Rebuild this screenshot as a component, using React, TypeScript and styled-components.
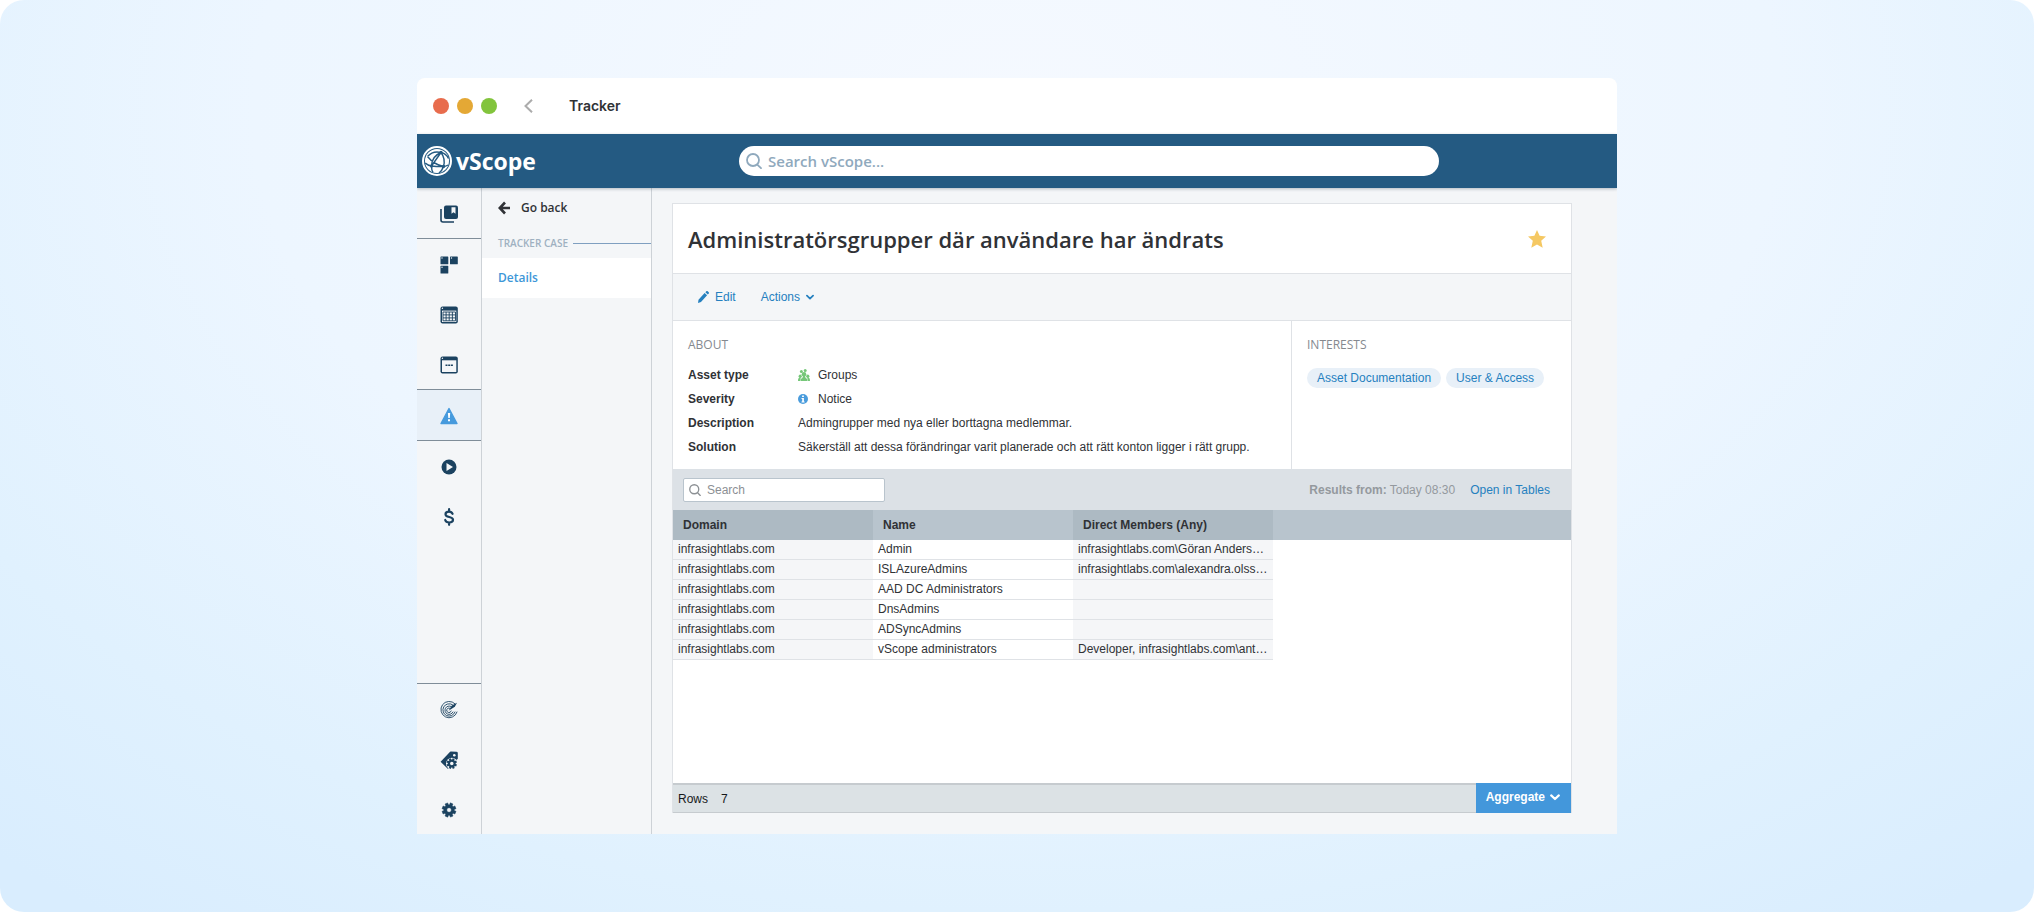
import React from 'react';
import styled, { createGlobalStyle, css } from 'styled-components';

const sans = '"Liberation Sans", Arial, sans-serif';
const humanist = '"Open Sans", "Noto Sans", sans-serif';
const system = 'Inter, Roboto, sans-serif';

const GlobalStyle = createGlobalStyle`
  *, *::before, *::after { box-sizing: border-box; }
  body { margin: 0; background: #ffffff; font: 12px/20px ${sans}; color: #303236; }
  h1, h2, p, dl, dd { margin: 0; }
  button { border: 0; padding: 0; background: none; font: inherit; color: inherit; cursor: pointer; }
  a { color: inherit; text-decoration: none; }
  svg { display: block; flex: none; }
`;

const Stage = styled.div`
  display: flex;
  justify-content: center;
  min-height: 100vh;
  padding: 78px 40px;
  border-radius: 24px;
  background: radial-gradient(ellipse 75% 110% at 50% 12%, #f5f9ff 0%, #edf6ff 50%, #e0f1fe 80%, #d9edfe 100%);
`;

const AppWindow = styled.div`
  display: flex;
  flex-direction: column;
  width: 100%;
  max-width: 1200px;
  border-radius: 8px 8px 0 0;
  overflow: hidden;
  background: #f4f6f8;
`;

const TitleBar = styled.div`
  display: flex;
  align-items: center;
  height: 56px;
  padding: 0 16px;
  background: #ffffff;
`;

const Lights = styled.div`
  display: flex;
  gap: 8px;
`;

const Light = styled.span<{ $color: string }>`
  width: 16px;
  height: 16px;
  border-radius: 50%;
  background: ${(p) => p.$color};
`;

const BackButton = styled.button`
  margin: 0 36px 0 27px;
`;

const WindowTitle = styled.span`
  font: 600 14px/20px ${system};
`;

const Header = styled.header`
  display: flex;
  align-items: center;
  height: 54px;
  background: #245a82;
  box-shadow: 0 1px 3px rgba(30, 50, 70, 0.3);
  z-index: 1;
`;

const Brand = styled.a`
  display: flex;
  align-items: center;
  gap: 4px;
  width: 144px;
  padding-left: 5px;
  color: #ffffff;
  font: 700 23px/30px ${humanist};
`;

const HeaderMain = styled.div`
  flex: 1;
  display: flex;
  justify-content: center;
`;

const GlobalSearch = styled.label`
  display: flex;
  align-items: center;
  gap: 6px;
  width: 100%;
  max-width: 700px;
  height: 30px;
  padding: 0 7px;
  border-radius: 15px;
  background: #ffffff;
  color: #8fa9bd;
`;

const plainInput = css`
  flex: 1;
  min-width: 0;
  border: 0;
  padding: 0;
  outline: 0;
  background: transparent;
  color: inherit;
  &::placeholder { color: inherit; opacity: 1; }
`;

const GlobalInput = styled.input`
  ${plainInput}
  font: 600 15px/20px ${humanist};
`;

const Body = styled.div`
  flex: 1;
  display: flex;
`;

const IconRail = styled.nav`
  display: flex;
  flex-direction: column;
  justify-content: space-between;
  width: 65px;
  border-right: 1px solid #cdd2d7;
  color: #1b4260;
`;

const RailGroup = styled.div`
  display: flex;
  flex-direction: column;
`;

const RailItem = styled.button<{ $line?: boolean; $active?: boolean }>`
  display: flex;
  align-items: center;
  justify-content: center;
  box-sizing: content-box;
  height: 48px;
  padding-top: 2px;
  ${(p) => p.$line && 'border-bottom: 1px solid #7f8d99;'}
  ${(p) => p.$active && 'background: #e8f0f8; color: #469add;'}
`;

const RailFooter = styled(RailGroup)`
  border-top: 1px solid #7f8d99;
`;

const SideNav = styled.nav`
  width: 170px;
  border-right: 1px solid #cdd2d7;
  font: 600 12px/20px ${humanist};
`;

const GoBack = styled.a`
  display: flex;
  align-items: center;
  gap: 11px;
  height: 40px;
  padding: 0 16px;
`;

const NavHeading = styled.h2`
  display: flex;
  align-items: center;
  gap: 5px;
  height: 30px;
  padding-left: 16px;
  color: #9fb1c1;
  font: 600 10px/20px ${humanist};
  &::after { content: ''; flex: 1; height: 1px; background: #7f9fc0; }
`;

const NavLink = styled.a`
  display: flex;
  align-items: center;
  height: 40px;
  padding: 0 16px;
  background: #ffffff;
  color: #3d97d8;
`;

const Main = styled.main`
  flex: 1;
  display: flex;
  min-width: 0;
  padding: 15px 45px 21px 20px;
`;

const Card = styled.section`
  flex: 1;
  display: flex;
  flex-direction: column;
  min-width: 0;
  border: 1px solid #dfe2e6;
  border-bottom: 0;
  background: #ffffff;
`;

const CardHeader = styled.div`
  display: flex;
  align-items: center;
  justify-content: space-between;
  height: 70px;
  padding: 0 25px 0 15px;
  border-bottom: 1px solid #dfe2e6;
`;

const PageTitle = styled.h1`
  font: 600 22px/30px ${humanist};
`;

const Toolbar = styled.div`
  display: flex;
  align-items: center;
  gap: 25px;
  height: 47px;
  padding: 0 25px;
  border-bottom: 1px solid #dfe2e6;
  background: #f4f6f8;
  color: #2580bf;
`;

const ToolButton = styled.button`
  display: flex;
  align-items: center;
  gap: 6px;
`;

const Info = styled.div`
  display: grid;
  grid-template-columns: minmax(0, 1fr) 280px;
`;

const InfoPane = styled.section<{ $divided?: boolean }>`
  padding: 14px 15px 10px;
  ${(p) => p.$divided && 'border-left: 1px solid #dfe2e6;'}
`;

const InfoHeading = styled.h2`
  margin-bottom: 8px;
  color: #85898f;
  font: 400 12px/20px ${humanist};
`;

const Facts = styled.dl`
  display: grid;
  grid-template-columns: 110px minmax(0, 1fr);
  line-height: 24px;
  dt { font-weight: 700; }
`;

const FactValue = styled.dd`
  display: flex;
  align-items: center;
`;

const FactIcon = styled.span`
  width: 20px;
`;

const Tags = styled.div`
  display: flex;
  gap: 5px;
  padding-top: 5px;
`;

const Tag = styled.a`
  padding: 0 10px;
  border-radius: 10px;
  background: #e8f0f8;
  color: #2580bf;
`;

const ResultBar = styled.div`
  display: flex;
  align-items: center;
  justify-content: space-between;
  height: 41px;
  padding: 0 21px 0 10px;
  background: #dce1e6;
`;

const FilterBox = styled.label`
  display: flex;
  align-items: center;
  gap: 6px;
  width: 202px;
  height: 24px;
  padding: 0 5px;
  border: 1px solid #b9c4cd;
  border-radius: 2px;
  background: #ffffff;
  color: #8c9094;
`;

const FilterInput = styled.input`
  ${plainInput}
  font: 12px/20px ${sans};
`;

const ResultMeta = styled.div`
  display: flex;
  gap: 15px;
  color: #94999e;
  a { color: #2580bf; }
`;

const TableArea = styled.div`
  flex: 1;
  background: linear-gradient(#b8c4cd 30px, transparent 30px);
`;

const DataTable = styled.table`
  width: 600px;
  table-layout: fixed;
  border-collapse: separate;
  border-spacing: 0;
  text-align: left;
  th { height: 30px; padding: 0 10px; }
  th:nth-child(odd) { background: #adbac3; }
  td {
    height: 20px;
    padding: 0 5px;
    border-bottom: 1px solid #dfe2e6;
    line-height: 19px;
    white-space: nowrap;
    overflow: hidden;
    text-overflow: ellipsis;
  }
  td:nth-child(odd) { background: #f5f6f8; }
`;

const CardFooter = styled.footer`
  display: flex;
  justify-content: space-between;
  height: 30px;
  background: #dce2e5;
  color: #16181a;
`;

const RowCount = styled.p`
  flex: 1;
  display: flex;
  align-items: center;
  gap: 13px;
  padding-left: 5px;
  border-top: 2px solid #c6cbcf;
  border-bottom: 1px solid #c6cbcf;
`;

const AggregateButton = styled.button`
  display: flex;
  align-items: center;
  gap: 5px;
  padding: 0 11px 2px 10px;
  background: #4397db;
  color: #ffffff;
  font-weight: 700;
`;

const Chevron = ({ size }: { size: number }) => (
  <svg width={size} height={size} viewBox="0 0 10 10" fill="none" stroke="currentColor" strokeWidth="2.200" strokeLinecap="round" strokeLinejoin="round">
    <path d="M1.200 3.400 5 7l3.800-3.600" />
  </svg>
);

const SearchIcon = ({ size }: { size: number }) => (
  <svg width={size} height={size} viewBox="0 0 16 16" fill="none" stroke="currentColor" strokeWidth="1.800" strokeLinecap="round">
    <circle cx="7" cy="7" r="6" />
    <path d="m11.500 11.800 3.500 3.400" />
  </svg>
);

const LogoMark = () => (
  <svg width="30" height="30" viewBox="0 0 30 30" fill="none">
    <circle cx="15" cy="15" r="14" stroke="#fff" strokeWidth="2" />
    <circle cx="15" cy="15" r="12" fill="#fff" />
    <g stroke="#245a82" strokeWidth="1.400">
      <path d="M19 6.500C13 9 9.500 14 9.500 20c0 3 .5 5 1.500 6.500M19 6.500c3 4 4 9 2.500 14-1 3-2.500 5-4.500 6.500M19 6.500c-6-1.500-10 0-13.500 4M19 6.500c4 .5 6 3 7.500 6M3.200 17c2 2 4 2.700 6.300 3 4 .5 8 1 12 .5 2-.2 3.500-.8 4.500-1.500M5.500 10.500c4 5 9 8.500 16 10M19 6.500 9.500 20" />
    </g>
    <g fill="#245a82">
      <circle cx="19" cy="6.500" r="1.700" />
      <circle cx="9.500" cy="20" r="1.700" />
      <circle cx="21.500" cy="20.500" r="1.700" />
    </g>
  </svg>
);

const gearPath =
  'M19.400 13a7.500 7.500 0 0 0 0-2l2.600-1-1.700-4.100-2.500 1.100a7.500 7.500 0 0 0-1.500-1.500L17.400 3 13.400 1.300 12.500 4h-2L9.500 1.400 5.600 3l1.100 2.600a7.500 7.500 0 0 0-1.400 1.400L2.700 6 1.100 10l2.500 1a7.500 7.500 0 0 0 0 2l-2.500 1 1.600 4 2.600-1.100a7.500 7.500 0 0 0 1.400 1.400L5.600 21l4 1.700 1-2.700h2l1 2.600 3.900-1.600-1.200-2.600a7.500 7.500 0 0 0 1.500-1.400l2.500 1 1.700-4zM11.600 15.500a3.500 3.500 0 1 1 0-7 3.500 3.500 0 0 1 0 7z';

const BookIcon = () => (
  <svg width="18" height="18" viewBox="0 0 18 18">
    <path d="M1 4v11a2 2 0 0 0 2 2h11" fill="none" stroke="currentColor" strokeWidth="1.600" />
    <rect x="4" y="0.500" width="14" height="13.500" rx="2" fill="currentColor" />
    <path d="M11.500 2.300h4v6.500l-2-1.500-2 1.500z" fill="#f4f6f8" />
  </svg>
);

const TilesIcon = () => (
  <svg width="18" height="18" viewBox="0 0 18 18" fill="currentColor">
    <rect x="0.500" y="0.500" width="7.800" height="7.800" rx="0.600" />
    <rect x="10" y="0.500" width="7.800" height="7.800" rx="0.600" />
    <rect x="0.500" y="9.800" width="7.800" height="7.800" rx="0.600" />
    <g fill="#f4f6f8">
      <circle cx="2" cy="2" r="0.700" />
      <circle cx="11.500" cy="2" r="0.700" />
      <circle cx="2" cy="11.300" r="0.700" />
    </g>
  </svg>
);

const GridIcon = () => (
  <svg width="18" height="18" viewBox="0 0 18 18">
    <rect x="0.500" y="0.500" width="17.300" height="17" rx="2" fill="currentColor" />
    <g fill="#f4f6f8">
      <circle cx="2.400" cy="2.200" r="0.700" />
      <path d="M2 4.600h14.300V16H2z" />
    </g>
    <path d="M3 6h12.500v8.800H3zM3 8.900h12.500M3 11.900h12.500M6.100 6v8.800M9.200 6v8.800M12.400 6v8.800" fill="none" stroke="currentColor" strokeWidth="0.900" />
  </svg>
);

const PanelIcon = () => (
  <svg width="18" height="18" viewBox="0 0 18 18">
    <rect x="0.500" y="0.500" width="17.300" height="17" rx="2" fill="currentColor" />
    <rect x="2" y="4.300" width="14.300" height="11.700" fill="#f4f6f8" />
    <circle cx="2.400" cy="2.200" r="0.700" fill="#f4f6f8" />
    <path d="M5.500 9.200h2M8.200 9.200h2M10.900 9.200h2" stroke="currentColor" strokeWidth="1.500" />
  </svg>
);

const AlertIcon = () => (
  <svg width="18" height="18" viewBox="0 0 18 18">
    <path d="M9 1.500 17 16.500H1z" fill="currentColor" stroke="currentColor" strokeWidth="1.400" strokeLinejoin="round" />
    <path d="M7.900 6h2.300l-.4 5H8.300zM8 12.300h2v1.900H8z" fill="#fff" />
  </svg>
);

const PlayIcon = () => (
  <svg width="18" height="18" viewBox="0 0 18 18">
    <circle cx="9" cy="9" r="7.500" fill="currentColor" />
    <path d="M6.500 5v8l6.500-4z" fill="#f4f6f8" />
  </svg>
);

const DollarIcon = () => (
  <svg width="18" height="18" viewBox="0 0 18 18" fill="none" stroke="currentColor" strokeWidth="2.200" strokeLinecap="round">
    <path d="M12.600 5.800C12 4.300 10.800 3.600 9 3.600c-2.200 0-3.500 1.100-3.500 2.600 0 3.900 7.500 1.700 7.500 5.600 0 1.700-1.500 2.700-3.800 2.700-2.200 0-3.500-.9-4-2.500M9.100 1.200v2M9.100 14.800v2" />
  </svg>
);

const RadarIcon = () => (
  <svg width="18" height="18" viewBox="0 0 18 18" fill="none" stroke="currentColor" strokeWidth="0.900" strokeLinecap="round">
    <path d="M15 2.800A8.200 8.200 0 1 0 17 11" />
    <path d="M12.500 3.700A6.200 6.200 0 1 0 15 11" />
    <path d="M11.200 5.500A4.200 4.200 0 1 0 13 11" />
    <path d="M10 7.200A2.300 2.300 0 1 0 11.200 10" />
    <path d="m8.600 9.700 3.200-5.200 5.200-2.700-2.200 4z" fill="currentColor" stroke="none" />
  </svg>
);

const TagGearIcon = () => (
  <svg width="18" height="18" viewBox="0 0 18 18">
    <path d="M.6 10.800 9.400 1.400a2 2 0 0 1 1.500-.8l5.500.1a1.400 1.400 0 0 1 1.400 1.400v5.600L8 18z" fill="currentColor" />
    <circle cx="14.300" cy="4.200" r="1.300" fill="#f4f6f8" />
    <circle cx="11.900" cy="12.600" r="5.900" fill="#f4f6f8" />
    <path transform="translate(6 6.600) scale(0.500)" d={gearPath} fill="currentColor" />
  </svg>
);

const GearIcon = () => (
  <svg width="16" height="16" viewBox="0 0 23 24">
    <path d={gearPath} fill="currentColor" stroke="currentColor" strokeWidth="0.800" strokeLinejoin="round" />
  </svg>
);

const railTop = [
  { label: 'Library', icon: <BookIcon />, line: true },
  { label: 'Dashboards', icon: <TilesIcon /> },
  { label: 'Tables', icon: <GridIcon /> },
  { label: 'Properties', icon: <PanelIcon />, line: true },
  { label: 'Tracker', icon: <AlertIcon />, line: true, active: true },
  { label: 'Discovery', icon: <PlayIcon /> },
  { label: 'Billing', icon: <DollarIcon /> },
];

const railBottom = [
  { label: 'Scan', icon: <RadarIcon /> },
  { label: 'Tag settings', icon: <TagGearIcon /> },
  { label: 'Settings', icon: <GearIcon /> },
];

const rows = [
  ['infrasightlabs.com', 'Admin', 'infrasightlabs.com\\Göran Anders…'],
  ['infrasightlabs.com', 'ISLAzureAdmins', 'infrasightlabs.com\\alexandra.olss…'],
  ['infrasightlabs.com', 'AAD DC Administrators', ''],
  ['infrasightlabs.com', 'DnsAdmins', ''],
  ['infrasightlabs.com', 'ADSyncAdmins', ''],
  ['infrasightlabs.com', 'vScope administrators', 'Developer, infrasightlabs.com\\ant…'],
];

export default function App() {
  return (
    <>
      <GlobalStyle />
      <Stage>
        <AppWindow>
          <TitleBar>
            <Lights>
              <Light $color="#e86c4d" />
              <Light $color="#e4a835" />
              <Light $color="#82c43c" />
            </Lights>
            <BackButton aria-label="Back">
              <svg width="9" height="14" viewBox="0 0 9 14" fill="none" stroke="#acacac" strokeWidth="2">
                <path d="M8 0.700 1.500 7 8 13.300" />
              </svg>
            </BackButton>
            <WindowTitle>Tracker</WindowTitle>
          </TitleBar>

          <Header>
            <Brand href="#">
              <LogoMark />
              vScope
            </Brand>
            <HeaderMain>
              <GlobalSearch>
                <SearchIcon size={16} />
                <GlobalInput type="text" placeholder="Search vScope..." aria-label="Search vScope" />
              </GlobalSearch>
            </HeaderMain>
          </Header>

          <Body>
            <IconRail>
              <RailGroup>
                {railTop.map((item) => (
                  <RailItem key={item.label} aria-label={item.label} $line={item.line} $active={item.active}>
                    {item.icon}
                  </RailItem>
                ))}
              </RailGroup>
              <RailFooter>
                {railBottom.map((item) => (
                  <RailItem key={item.label} aria-label={item.label}>
                    {item.icon}
                  </RailItem>
                ))}
              </RailFooter>
            </IconRail>

            <SideNav>
              <GoBack href="#">
                <svg width="12" height="14" viewBox="0 0 12 14" fill="none" stroke="currentColor" strokeWidth="2.600">
                  <path d="M7 1.500 1.800 7 7 12.500M2 7h10" />
                </svg>
                Go back
              </GoBack>
              <NavHeading>TRACKER CASE</NavHeading>
              <NavLink href="#">Details</NavLink>
            </SideNav>

            <Main>
              <Card>
                <CardHeader>
                  <PageTitle>Administratörsgrupper där användare har ändrats</PageTitle>
                  <button aria-label="Favourite">
                    <svg width="18" height="18" viewBox="0 0 18 18" fill="#f5c863">
                      <path d="m9 0 2.600 5.700 6.400.7-4.800 4.300 1.500 7L9 14.500 3.300 17.700l1.500-7L0 6.400l6.400-.7z" />
                    </svg>
                  </button>
                </CardHeader>

                <Toolbar>
                  <ToolButton>
                    <svg width="11" height="12" viewBox="0 0 11 12" fill="currentColor">
                      <path d="M0 12l.5-3.300L6.600 2l2.500 2.300L3 11zM7.400 1.200 8.300.3a1 1 0 0 1 1.400 0l1 .9a1 1 0 0 1 0 1.400l-.9 1z" />
                    </svg>
                    Edit
                  </ToolButton>
                  <ToolButton>
                    Actions
                    <Chevron size={8} />
                  </ToolButton>
                </Toolbar>

                <Info>
                  <InfoPane>
                    <InfoHeading>ABOUT</InfoHeading>
                    <Facts>
                      <dt>Asset type</dt>
                      <FactValue>
                        <FactIcon>
                          <svg width="12" height="12" viewBox="0 0 12 12" fill="#76c779">
                            <circle cx="6" cy="5.200" r="2.300" />
                            <path d="M2.600 12c0-1.800.4-2.600 1.700-3L5 7h2l.7 2c1.300.4 1.700 1.200 1.700 3zM0 12c0-2.300.6-3.700 2.900-3.900L2.100 12zM12 12c0-2.300-.6-3.700-2.900-3.900l.8 3.900z" />
                            <circle cx="3.400" cy="2.500" r="1.500" />
                            <circle cx="7.200" cy="1.500" r="1.500" />
                            <circle cx="2.200" cy="7.200" r="1.600" />
                            <circle cx="9.800" cy="7.200" r="1.600" />
                          </svg>
                        </FactIcon>
                        Groups
                      </FactValue>
                      <dt>Severity</dt>
                      <FactValue>
                        <FactIcon>
                          <svg width="10" height="10" viewBox="0 0 10 10">
                            <circle cx="5" cy="5" r="5" fill="#4a9cdc" />
                            <path d="M4.100 1.500h1.800v1.600H4.100zM3.500 4h2.400v3.400h.7v1.100H3.500V7.400h.7V5.100h-.7z" fill="#fff" />
                          </svg>
                        </FactIcon>
                        Notice
                      </FactValue>
                      <dt>Description</dt>
                      <FactValue>Admingrupper med nya eller borttagna medlemmar.</FactValue>
                      <dt>Solution</dt>
                      <FactValue>Säkerställ att dessa förändringar varit planerade och att rätt konton ligger i rätt grupp.</FactValue>
                    </Facts>
                  </InfoPane>
                  <InfoPane $divided>
                    <InfoHeading>INTERESTS</InfoHeading>
                    <Tags>
                      <Tag href="#">Asset Documentation</Tag>
                      <Tag href="#">User &amp; Access</Tag>
                    </Tags>
                  </InfoPane>
                </Info>

                <ResultBar>
                  <FilterBox>
                    <SearchIcon size={12} />
                    <FilterInput type="text" placeholder="Search" aria-label="Search results" />
                  </FilterBox>
                  <ResultMeta>
                    <span>
                      <b>Results from:</b> Today 08:30
                    </span>
                    <a href="#">Open in Tables</a>
                  </ResultMeta>
                </ResultBar>

                <TableArea>
                  <DataTable>
                    <thead>
                      <tr>
                        <th>Domain</th>
                        <th>Name</th>
                        <th>Direct Members (Any)</th>
                      </tr>
                    </thead>
                    <tbody>
                      {rows.map((row) => (
                        <tr key={row[1]}>
                          {row.map((cell, i) => (
                            <td key={i}>{cell}</td>
                          ))}
                        </tr>
                      ))}
                    </tbody>
                  </DataTable>
                </TableArea>

                <CardFooter>
                  <RowCount>
                    <span>Rows</span>
                    <span>7</span>
                  </RowCount>
                  <AggregateButton>
                    Aggregate
                    <Chevron size={10} />
                  </AggregateButton>
                </CardFooter>
              </Card>
            </Main>
          </Body>
        </AppWindow>
      </Stage>
    </>
  );
}
